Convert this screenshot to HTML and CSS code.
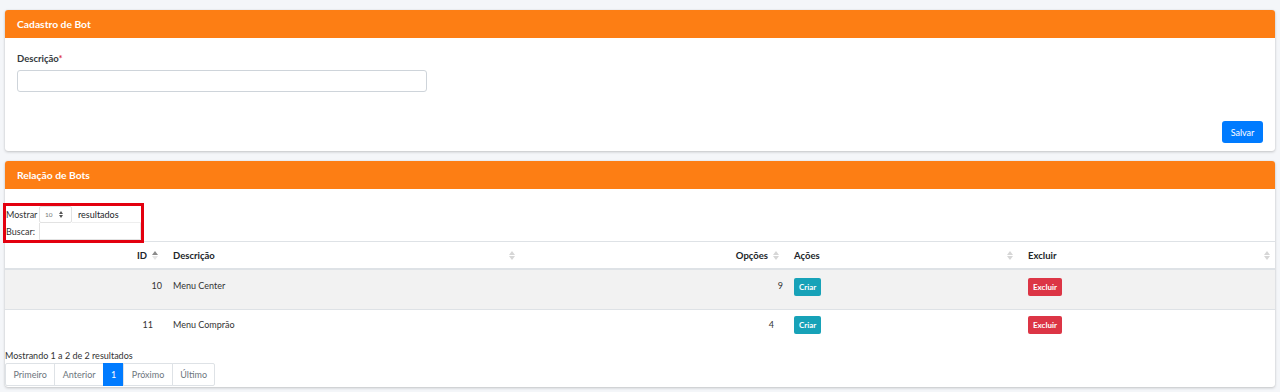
FILE: index.html
```html
<!DOCTYPE html>
<html lang="pt-BR">
<head>
    <meta charset="UTF-8">
    <meta name="viewport" content="width=device-width, initial-scale=1.0">
    <title>Cadastro de Bot</title>
    <link rel="stylesheet" href="styles.css">
</head>
<body>

    <div class="card">
        <div class="card-header">Cadastro de Bot</div>
        <div class="card-body form-body">
            <label class="form-label" for="descricao">Descrição<span class="req">*</span></label>
            <input type="text" id="descricao" class="form-input">
            <div class="form-actions">
                <button class="btn btn-primary">Salvar</button>
            </div>
        </div>
    </div>

    <div class="card">
        <div class="card-header">Relação de Bots</div>
        <div class="card-body list-body">
            <div class="dt-top">
                <div class="dt-row">
                    <span class="dt-label">Mostrar</span>
                    <span class="dt-select">10 <span class="caret"></span></span>
                    <span class="dt-after">resultados</span>
                </div>
                <div class="dt-row">
                    <span class="dt-label">Buscar:</span>
                    <span class="dt-search"></span>
                </div>
            </div>

            <table class="dt-table">
                <colgroup>
                    <col style="width: 158px">
                    <col style="width: 357px">
                    <col style="width: 264px">
                    <col style="width: 234px">
                    <col>
                </colgroup>
                <thead>
                    <tr>
                        <th class="num sorted">ID <span class="sort asc"></span></th>
                        <th>Descrição <span class="sort"></span></th>
                        <th class="num">Opções <span class="sort"></span></th>
                        <th>Ações <span class="sort"></span></th>
                        <th>Excluir <span class="sort"></span></th>
                    </tr>
                </thead>
                <tbody>
                    <tr class="odd">
                        <td class="num">10</td>
                        <td>Menu Center</td>
                        <td class="num">9</td>
                        <td><button class="btn btn-sm btn-info">Criar</button></td>
                        <td><button class="btn btn-sm btn-danger">Excluir</button></td>
                    </tr>
                    <tr>
                        <td class="num">11</td>
                        <td>Menu Comprão</td>
                        <td class="num">4</td>
                        <td><button class="btn btn-sm btn-info">Criar</button></td>
                        <td><button class="btn btn-sm btn-danger">Excluir</button></td>
                    </tr>
                </tbody>
            </table>

            <div class="dt-info">Mostrando 1 a 2 de 2 resultados</div>
            <ul class="pagination">
                <li class="page-item">Primeiro</li>
                <li class="page-item">Anterior</li>
                <li class="page-item active">1</li>
                <li class="page-item">Próximo</li>
                <li class="page-item">Último</li>
            </ul>
        </div>
    </div>

</body>
</html>
```

FILE: styles.css
```css
body {
    font-family: 'Lato', 'Liberation Sans', sans-serif;
    font-size: 9px;
    background-color: #f4f6f9;
    color: #212529;
    margin: 0;
    padding: 10px 5px 0 5px;
}

.card {
    background: white;
    border-radius: 3px;
    box-shadow: 0 0 1px rgba(0, 0, 0, 0.125), 0 1px 3px rgba(0, 0, 0, 0.2);
    margin-bottom: 10px;
}

.card-header {
    background: #fd7e14;
    color: white;
    font-weight: bold;
    font-size: 10.3px;
    height: 28px;
    line-height: 28px;
    padding: 0 12px;
    border-radius: 3px 3px 0 0;
}

.form-body {
    padding: 14px 12px 8px 12px;
}

.form-label {
    display: block;
    font-weight: bold;
    font-size: 9.5px;
    color: #343a40;
    line-height: 13px;
    margin-bottom: 5px;
}

.req {
    color: #dc3545;
}

.form-input {
    display: block;
    box-sizing: border-box;
    width: 410px;
    height: 22px;
    border: 1px solid #ced4da;
    border-radius: 3px;
    margin: 0;
}

.form-actions {
    display: flex;
    justify-content: flex-end;
    margin-top: 29px;
}

.btn {
    font-family: inherit;
    border: none;
    color: white;
    cursor: pointer;
    padding: 0;
}

.btn-primary {
    background: #007bff;
    width: 41px;
    height: 22px;
    border-radius: 3px;
    font-size: 9px;
}

.btn-sm {
    display: inline-block;
    vertical-align: middle;
    height: 18px;
    border-radius: 2px;
    font-size: 8px;
    font-weight: bold;
    padding: 0 5px;
}

.btn-info {
    background: #17a2b8;
}

.btn-danger {
    background: #dc3545;
}

.list-body {
    padding: 14px 0 1px 0;
}

/* destaque vermelho em volta dos controles */
.dt-top {
    width: 135px;
    border: 3px solid #e3000f;
    margin-left: -2px;
    margin-bottom: -2px;
    position: relative;
    z-index: 1;
}

.dt-row {
    display: flex;
    align-items: stretch;
    height: 17px;
}

.dt-label {
    line-height: 17px;
    width: 33px;
    color: #333;
}

.dt-select {
    box-sizing: border-box;
    display: flex;
    align-items: center;
    width: 33px;
    border: 1px solid #e2e2e2;
    border-radius: 2px;
    font-size: 6.5px;
    color: #777;
    padding-left: 5px;
}

.caret {
    position: relative;
    width: 5px;
    height: 7px;
    margin-left: 6px;
}

.caret::before,
.caret::after {
    content: "";
    position: absolute;
    left: 0;
    border-left: 2.5px solid transparent;
    border-right: 2.5px solid transparent;
}

.caret::before {
    top: 0;
    border-bottom: 3px solid #555;
}

.caret::after {
    top: 4px;
    border-top: 3px solid #555;
}

.dt-after {
    flex-grow: 1;
    line-height: 17px;
    padding-left: 6px;
    border-bottom: 1px solid #eee;
}

.dt-search {
    flex-grow: 1;
    border: 1px solid #e2e2e2;
    border-top: none;
}

.dt-table {
    width: 100%;
    table-layout: fixed;
    border-collapse: collapse;
    border-top: 1px solid #dee2e6;
}

.dt-table th {
    position: relative;
    text-align: left;
    font-weight: bold;
    font-size: 9.5px;
    height: 26px;
    padding: 0 16px 0 10px;
    border-bottom: 2px solid #dee2e6;
}

.dt-table td {
    height: 18px;
    line-height: 18px;
    padding: 7px 10px 13px 10px;
    border-bottom: 1px solid #dee2e6;
    color: #333;
}

.dt-table tbody tr:last-child td {
    border-bottom: none;
    padding: 6px 10px 15px 10px;
}

.dt-table .num {
    text-align: right;
}

.dt-table td.num {
    padding-right: 1px;
}

.dt-table tr.odd td {
    background: #f2f2f2;
}

.sort {
    position: absolute;
    right: 5px;
    top: 9px;
    width: 6px;
    height: 9px;
}

.sort::before,
.sort::after {
    content: "";
    position: absolute;
    left: 0;
    border-left: 3px solid transparent;
    border-right: 3px solid transparent;
}

.sort::before {
    top: 0;
    border-bottom: 4px solid #d6d6d6;
}

.sort::after {
    top: 5px;
    border-top: 4px solid #d6d6d6;
}

.sort.asc::before {
    border-bottom-color: #8a8a8a;
}

.sort.asc::after {
    border-top-color: #e4e4e4;
}

.dt-info {
    line-height: 14px;
    color: #333;
}

.pagination {
    display: flex;
    list-style: none;
    margin: 0;
    padding: 0;
}

.page-item {
    height: 21px;
    line-height: 21px;
    padding: 0 7.5px;
    border: 1px solid #dee2e6;
    margin-left: -1px;
    color: #6c757d;
    background: white;
}

.page-item:first-child {
    margin-left: 0;
    border-radius: 2px 0 0 2px;
}

.page-item:last-child {
    border-radius: 0 2px 2px 0;
}

.page-item.active {
    background: #007bff;
    border-color: #007bff;
    color: white;
    padding: 0 7px;
}
```
